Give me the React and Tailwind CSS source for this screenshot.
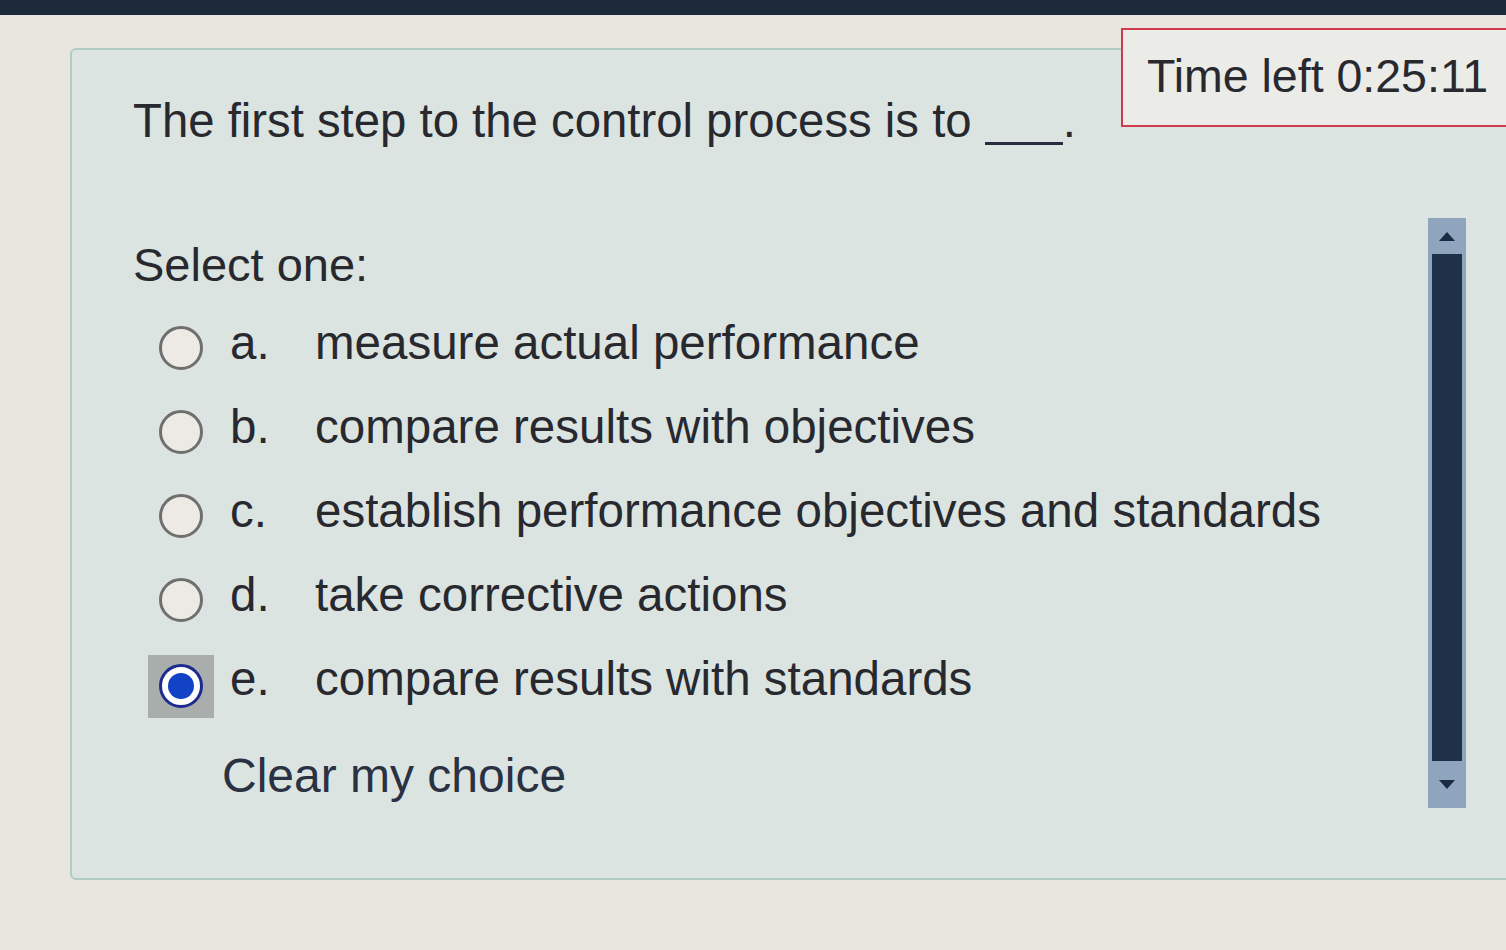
import React from "react";

const options = [
  { letter: "a.", text: "measure actual performance" },
  { letter: "b.", text: "compare results with objectives" },
  { letter: "c.", text: "establish performance objectives and standards" },
  { letter: "d.", text: "take corrective actions" },
  { letter: "e.", text: "compare results with standards", checked: true },
];

function Radio({ checked }) {
  if (checked) {
    return (
      <div className="mt-[14px] flex h-[63px] w-[66px] items-center justify-center bg-[#a9adac]">
        <div className="flex h-[44px] w-[44px] items-center justify-center rounded-full border-[3px] border-[#1d2b8e] bg-white">
          <div className="h-[26px] w-[26px] rounded-full bg-[#1242c6]" />
        </div>
      </div>
    );
  }
  return (
    <div className="mt-[10px] flex h-[63px] w-[66px] items-center justify-center">
      <div className="h-[44px] w-[44px] rounded-full border-[3px] border-[#6f6f6f] bg-[#ede9e5]" />
    </div>
  );
}

function App() {
  return (
    <div
      className="relative h-screen w-full overflow-hidden bg-[#e9e6e0] text-[#28282f]"
      style={{ fontFamily: '"Liberation Sans", Arial, sans-serif' }}
    >
      <div className="h-[15px] bg-[#1b2939]" />
      <div className="pl-[70px] pt-[33px]">
        <div className="flex h-[832px] w-[1460px] rounded-md border-2 border-[#b1cbc6] bg-[#dbe4e0]">
          <div className="flex-1 pl-[61px] pt-[44px]">
            <p className="text-[47.3px] leading-[54px]">
              The first step to the control process is to{" "}
              <span className="inline-block w-[78px] border-b-[3px] border-[#2b2b40] align-[-8px]" />.
            </p>
            <p className="mt-[90px] text-[47px] leading-[54px]">Select one:</p>
            <div className="mt-[9px]">
              {options.map((o) => (
                <div key={o.letter} className="flex h-[84px] items-center pl-[15px]">
                  <Radio checked={o.checked} />
                  <span className="ml-[16px] w-[85px] text-[47.5px] leading-[54px]">{o.letter}</span>
                  <span className="text-[47.5px] leading-[54px]">{o.text}</span>
                </div>
              ))}
            </div>
            <p className="ml-[89px] mt-[28px] text-[48px] leading-[54px] text-[#2a3142]">
              Clear my choice
            </p>
          </div>
          <div className="mr-[62px] mt-[168px] flex h-[590px] w-[38px] flex-col items-center bg-[#8fa5be]">
            <div className="flex h-[36px] items-center justify-center">
              <svg width="16" height="9" viewBox="0 0 16 9">
                <path d="M8 0 L16 9 L0 9 Z" fill="#1c2b44" />
              </svg>
            </div>
            <div className="h-[507px] w-[30px] bg-[#1f3049]" />
            <div className="flex flex-1 items-center justify-center">
              <svg width="16" height="9" viewBox="0 0 16 9">
                <path d="M0 0 L16 0 L8 9 Z" fill="#1c2b44" />
              </svg>
            </div>
          </div>
        </div>
      </div>
      <div className="absolute left-[1121px] top-[28px] h-[99px] w-[420px] border-2 border-[#cf3b4e] bg-[#ebebe8] pl-[24px] pt-[19px] text-[46.5px] leading-[54px]">
        Time left 0:25:11
      </div>
    </div>
  );
}

export default App;
